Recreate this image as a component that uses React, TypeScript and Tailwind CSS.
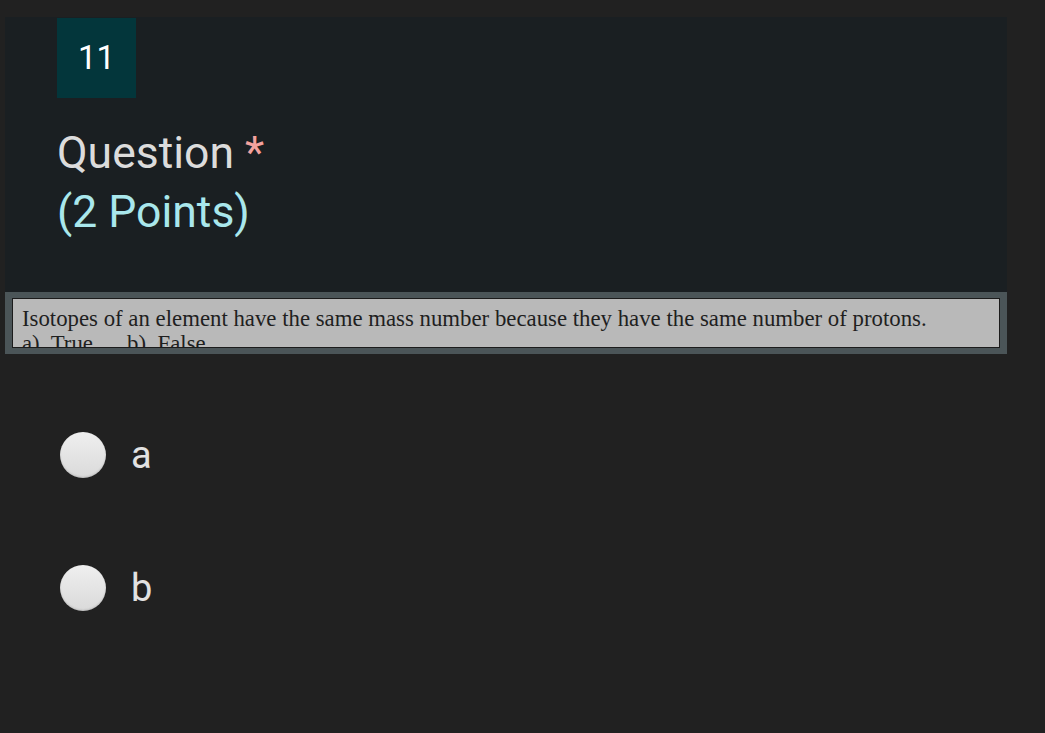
export default function App() {
  const options = ["a", "b"];

  return (
    <div className="h-[733px] w-full overflow-hidden bg-[#212121] pt-[17px] font-['Roboto',sans-serif]">
      <section className="ml-[5px] w-[1002px] bg-[#1a1f22]">
        <div className="h-[275px] pl-[52px] pt-px">
          <div className="flex h-[80px] w-[79px] items-center justify-center bg-[#03363b] text-[33px] text-white">
            11
          </div>
          <h2 className="mt-[26px] text-[44.5px] leading-[59px] text-[#dcdcdc]">
            Question <span className="text-[#f3a29e]">*</span>
            <br />
            <span className="text-[#a9e7ec]">(2 Points)</span>
          </h2>
        </div>

        <div className="bg-[#4b5558] px-[7px] py-[6px]">
          <div className="h-[50px] overflow-hidden border border-[#1c1c1c] bg-[#b9b9b9] pl-[9px] pt-[7px] font-['Liberation_Serif',serif] text-[22.8px] leading-[25px] text-[#1f1f1f]">
            <p>Isotopes of an element have the same mass number because they have the same number of protons.</p>
            <p className="whitespace-pre">a)  True      b)  False</p>
          </div>
        </div>
      </section>

      <div className="ml-[60px] mt-[78px] flex flex-col gap-[87px]">
        {options.map((o) => (
          <label key={o} className="flex items-center gap-[25px]">
            <span className="h-[46px] w-[46px] rounded-full bg-gradient-to-b from-[#efefef] to-[#dadada] shadow-[inset_0_-1px_2px_rgba(0,0,0,0.15)]" />
            <span className="text-[38px] leading-none text-[#e2e2e2]">{o}</span>
          </label>
        ))}
      </div>
    </div>
  );
}
